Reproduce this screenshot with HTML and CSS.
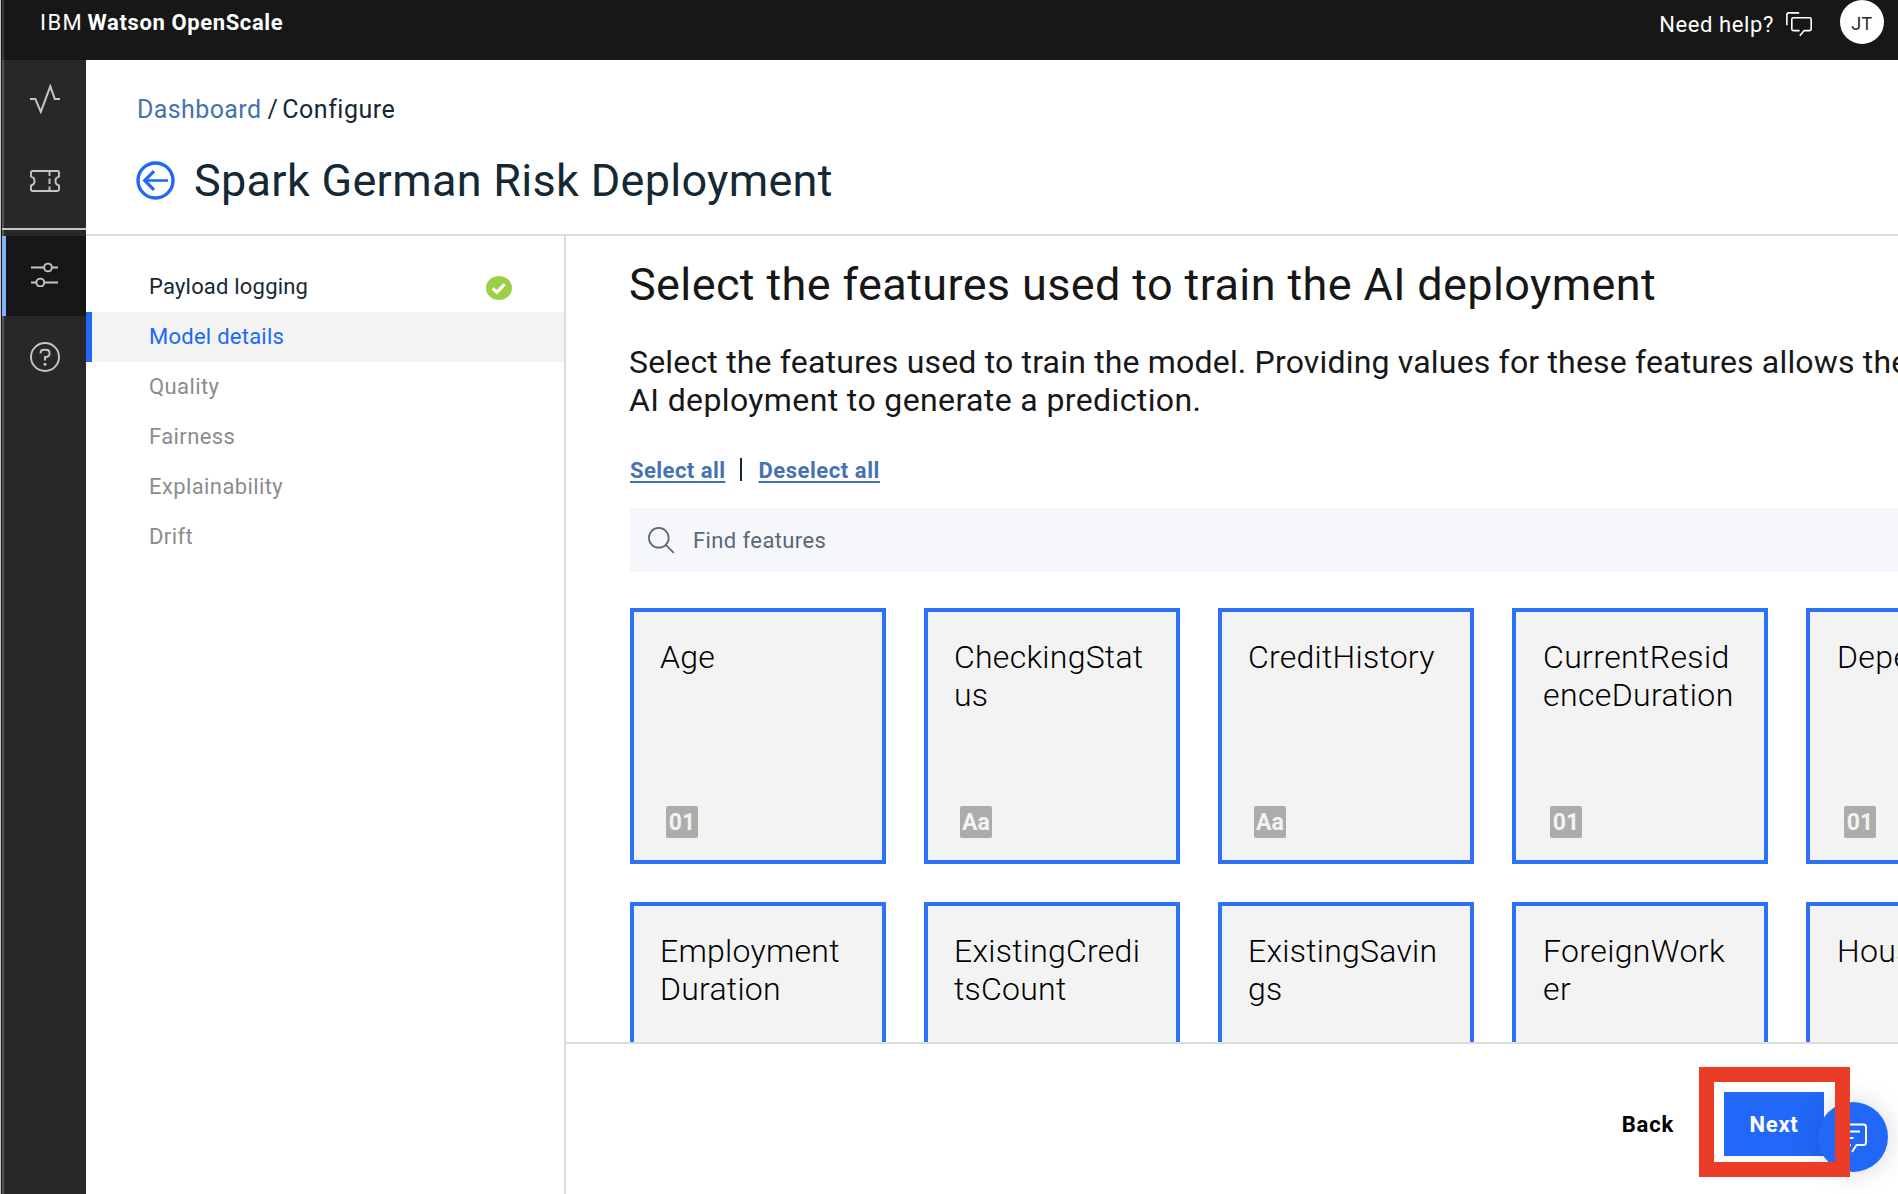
FILE: index.html
```html
<!DOCTYPE html>
<html lang="en">
<head>
<meta charset="utf-8">
<title>IBM Watson OpenScale</title>
<link rel="stylesheet" href="styles.css">
</head>
<body>
<div class="edge"></div>
<div class="app">
  <header class="topbar">
    <div class="brand"><span class="brand-ibm">IBM</span><b>Watson OpenScale</b></div>
    <div class="help">Need help?</div>
    <svg class="help-icon" width="27" height="25" viewBox="0 0 27 25" fill="none" stroke="#fff" stroke-width="1.6"><path d="M.9 13.2V2.6Q.9.9 2.6.9H13.2"/><path d="M13.6 18.6H7.4Q5.8 18.6 5.8 17V7.4Q5.8 5.800 7.400 5.800H23.600Q25.200 5.800 25.200 7.400V17Q25.200 18.600 23.600 18.600H18.200L13.800 23.800"/></svg>
    <div class="avatar">JT</div>
  </header>
  <div class="body">
    <nav class="rail">
      <a class="rail-item activity"><svg width="30" height="30" viewBox="0 0 30 30" fill="none" stroke="#c1c7cd" stroke-width="2"><path d="M0 15H5.400L10.800 27.800 20.300 2.300 24.800 15H30"/></svg></a>
      <a class="rail-item ticket"><svg width="30" height="22" viewBox="0 0 30 22" fill="none" stroke="#c1c7cd" stroke-width="1.900"><path d="M2.500 1H27.500Q29 1 29 2.500V6.600A4.500 4.500 0 0 0 29 15.400V19.500Q29 21 27.500 21H2.500Q1 21 1 19.500V15.400A4.500 4.500 0 0 0 1 6.600V2.500Q1 1 2.500 1Z"/><path d="M19.500 1V6M19.500 8.500V14M19.500 16.500V21"/></svg></a>
      <a class="rail-item current"><svg width="27" height="25" viewBox="0 0 27 25" fill="none" stroke="#c1c7cd" stroke-width="1.900"><path d="M0 5.500H13M21 5.500H27M0 20.500H5M13.500 20.500H27"/><circle cx="17" cy="5.500" r="3.900"/><circle cx="9.300" cy="20.500" r="3.900"/></svg></a>
      <a class="rail-item question"><svg width="30" height="30" viewBox="0 0 30 30" fill="none" stroke="#c1c7cd" stroke-width="1.900"><circle cx="15" cy="15" r="14"/><path d="M10.500 11.500V11.200Q10.500 7.800 14 7.800H16Q19.600 7.800 19.600 11.300T16 15H15V18.500"/><circle cx="15" cy="22.300" r="1.500" fill="#c1c7cd" stroke="none"/></svg></a>
    </nav>
    <div class="page">
      <div class="page-head">
        <div class="crumbs"><a>Dashboard</a><span class="slash">/</span><span>Configure</span></div>
        <div class="title-row">
          <svg width="39" height="39" viewBox="0 0 39 39" fill="none" stroke="#2168f8"><circle cx="19.500" cy="19.500" r="17.500" stroke-width="3.400"/><path d="M32 19.500H9" stroke-width="2.600"/><path d="M18 10.200 8.700 19.500 18 28.800" stroke-width="3.200"/></svg>
          <h1>Spark German Risk Deployment</h1>
        </div>
      </div>
      <div class="columns">
        <aside class="steps">
          <a class="step done">Payload logging<svg width="26" height="24" viewBox="0 0 26 24"><ellipse cx="13" cy="12" rx="13" ry="12" fill="#9ccf45"/><path d="M6.700 12.400 10.900 16.300 18.600 8.200" fill="none" stroke="#fff" stroke-width="3.200"/></svg></a>
          <a class="step selected">Model details</a>
          <a class="step">Quality</a>
          <a class="step">Fairness</a>
          <a class="step">Explainability</a>
          <a class="step">Drift</a>
        </aside>
        <section class="main">
          <div class="content">
            <h2>Select the features used to train the AI deployment</h2>
            <p>Select the features used to train the model. Providing values for these features allows the<br><span class="second">AI deployment to generate a prediction.</span></p>
            <div class="links"><a>Select all</a><i></i><a class="wide">Deselect all</a></div>
            <div class="search"><svg width="27" height="27" viewBox="0 0 27 27" fill="none" stroke="#5a6872" stroke-width="1.700"><circle cx="10.800" cy="10.800" r="9.900"/><path d="M17.800 17.800 25.800 25.800"/></svg>Find features</div>
            <div class="cards">
              <div class="card"><div>Age</div><span class="type">01</span></div>
              <div class="card"><div>CheckingStat<br>us</div><span class="type">Aa</span></div>
              <div class="card"><div>CreditHistory</div><span class="type">Aa</span></div>
              <div class="card shifted"><div>CurrentResid<br>enceDuration</div><span class="type">01</span></div>
              <div class="card shifted"><div>Dependents</div><span class="type">01</span></div>
              <div class="card"><div>Employment<br>Duration</div></div>
              <div class="card"><div>ExistingCredi<br>tsCount</div></div>
              <div class="card"><div>ExistingSavin<br>gs</div></div>
              <div class="card shifted"><div>ForeignWork<br>er</div></div>
              <div class="card shifted"><div>Housing</div></div>
            </div>
          </div>
          <footer class="actions">
            <a class="back">Back</a><a class="next">Next</a>
          </footer>
        </section>
      </div>
    </div>
  </div>
</div>
<div class="chat"><svg width="30" height="30" viewBox="0 0 30 30" fill="none" stroke="#fff" stroke-width="1.900"><path d="M13 22H4Q1.500 22 1.500 19.500V4Q1.500 1.500 4 1.500H25.500Q28 1.500 28 4V19.500Q28 22 25.500 22H18.500L14 29"/><path d="M8 8.500H22M8 15H15.500"/></svg></div>
<div class="highlight"></div>
</body>
</html>
```
FILE: styles.css
```css
* { box-sizing: border-box; }
body {
  margin: 0;
  width: 1898px;
  height: 1194px;
  overflow: hidden;
  position: relative;
  background: #fff;
  color: #171717;
  font-family: Roboto, "Liberation Sans", sans-serif;
  font-size: 22px;
}
h1, h2, p { margin: 0; font-weight: 400; }
svg { display: block; flex: none; }

.edge {
  position: absolute;
  inset: 0 auto 0 0;
  width: 1px;
  background: #c0c6c5;
}
.app { height: 1194px; display: flex; flex-direction: column; padding-left: 1px; }

/* top bar */
.topbar {
  height: 60px;
  flex: none;
  display: flex;
  align-items: flex-start;
  background: #171717;
  color: #fff;
  border-left: 1px solid #0e1414;
  box-shadow: inset 2px 0 #353a3a;
  padding-left: 38px;
}
.brand { line-height: 45px; letter-spacing: .62px; flex: 1; display: flex; }
.brand-ibm { width: 47.500px; letter-spacing: 1.400px; }
.help { line-height: 49px; letter-spacing: .6px; }
.help-icon { margin: 12px 27px 0 12px; }
.avatar {
  width: 44px;
  height: 44px;
  margin-right: 14px;
  border-radius: 50%;
  background: #fff;
  color: #282828;
  text-align: center;
  font-size: 18px;
  line-height: 47px;
  letter-spacing: .5px;
}

/* icon rail */
.body { flex: 1; display: flex; min-height: 0; }
.rail {
  width: 85px;
  flex: none;
  background: #282828;
  border-left: 1px solid #171d1d;
  box-shadow: inset 2px 0 #515656;
}
.rail-item { display: flex; padding-left: 28px; }
.activity { height: 82px; padding-top: 24px; }
.ticket { height: 88px; padding-top: 28px; border-bottom: 2px solid #c1c7cd; }
.current {
  height: 80px;
  margin-top: 6px;
  padding: 26px 0 0 25px;
  background: #171717;
  border-left: 4px solid #82b1ff;
}
.question { padding-top: 26px; }

/* page header */
.page { flex: 1; min-width: 0; display: flex; flex-direction: column; }
.page-head {
  height: 176px;
  flex: none;
  padding: 34px 0 0 50px;
  border-bottom: 2px solid #dcdcdc;
  color: #152935;
}
.crumbs { display: flex; font-size: 25px; line-height: 32px; letter-spacing: .5px; padding-left: 1px; }
.crumbs a { color: #4672b0; letter-spacing: .4px; }
.slash { padding: 0 4px 0 6px; }
.title-row { display: flex; align-items: center; gap: 19px; margin-top: 28px; }
.title-row svg { margin-top: -1px; }
h1 { font-size: 45px; line-height: 54px; letter-spacing: .3px; }

/* step list */
.columns { flex: 1; display: flex; min-height: 0; }
.steps { width: 480px; flex: none; padding-top: 26px; border-right: 2px solid #dcdcdc; }
.step {
  height: 50px;
  display: flex;
  align-items: center;
  justify-content: space-between;
  padding: 0 52px 2px 63px;
  letter-spacing: .4px;
  color: #8c8c8c;
}
.done { color: #152935; letter-spacing: .2px; }
.done svg { margin-top: 4px; }
.selected {
  color: #2168f8;
  background: #f3f3f3;
  border-left: 6px solid #2168f8;
  padding-left: 57px;
  letter-spacing: .25px;
}

/* feature picker */
.main { flex: 1; min-width: 0; display: flex; flex-direction: column; }
.content { height: 806px; flex: none; overflow: hidden; padding: 22px 0 0 64px; }
h2 { font-size: 45px; line-height: 54px; letter-spacing: .38px; white-space: nowrap; margin-left: -1px; }
p { margin: 31px 0 0 -1px; font-size: 32px; line-height: 38px; letter-spacing: .18px; white-space: nowrap; }
.second { letter-spacing: .38px; }
.links {
  display: flex;
  align-items: center;
  margin-top: 38px;
  height: 28px;
  line-height: 28px;
  font-weight: 700;
}
.links a {
  color: #4672b0;
  letter-spacing: .45px;
  text-decoration: underline 2px;
  text-underline-offset: 3px;
}
.links .wide { letter-spacing: .55px; }
.links i { width: 2px; height: 23px; margin: 0 16px 3px 15px; background: #152935; }
.search {
  height: 64px;
  margin-top: 23px;
  padding-left: 18px;
  display: flex;
  align-items: center;
  gap: 18px;
  background: #f5f7fb;
  color: #5a6872;
  letter-spacing: .4px;
}
.cards { display: grid; grid-template-columns: repeat(5, 256px); gap: 38px; margin-top: 36px; }
.card {
  height: 256px;
  border: 4px solid #2d72f6;
  background: #f3f3f3;
  padding: 26px 24px 22px 26px;
  display: flex;
  flex-direction: column;
  justify-content: space-between;
  color: #000;
  font-size: 32px;
  line-height: 38px;
  font-weight: 300;
  letter-spacing: .25px;
}
.shifted { padding-left: 27px; padding-right: 10px; letter-spacing: .38px; }
.type {
  width: 32px;
  height: 32px;
  margin-left: 6px;
  border-radius: 2px;
  background: #acacaa;
  color: #f3f3f3;
  font-size: 23px;
  font-weight: 700;
  line-height: 33px;
  letter-spacing: 0;
  text-align: center;
}
.shifted .type { margin-left: 7px; }

/* footer */
.actions {
  flex: 1;
  display: flex;
  align-items: flex-start;
  justify-content: flex-end;
  padding: 48px 74px 0 0;
  border-top: 2px solid #dcdcdc;
  font-weight: 700;
  line-height: 65px;
  letter-spacing: .8px;
}
.back { color: #000; margin-right: 50px; }
.next { width: 100px; height: 64px; background: #2168f8; color: #fff; text-align: center; }

/* floating chat button and callout frame */
.chat {
  position: absolute;
  left: 1818px;
  top: 1102px;
  width: 70px;
  height: 70px;
  border-radius: 50%;
  background: #2168f8;
  box-shadow: 0 0 28px rgba(0, 0, 0, .16);
  padding: 21px 0 0 20px;
}
.highlight {
  position: absolute;
  left: 1699px;
  top: 1067px;
  width: 151px;
  height: 110px;
  border: 15px solid #eb3c27;
}
```
